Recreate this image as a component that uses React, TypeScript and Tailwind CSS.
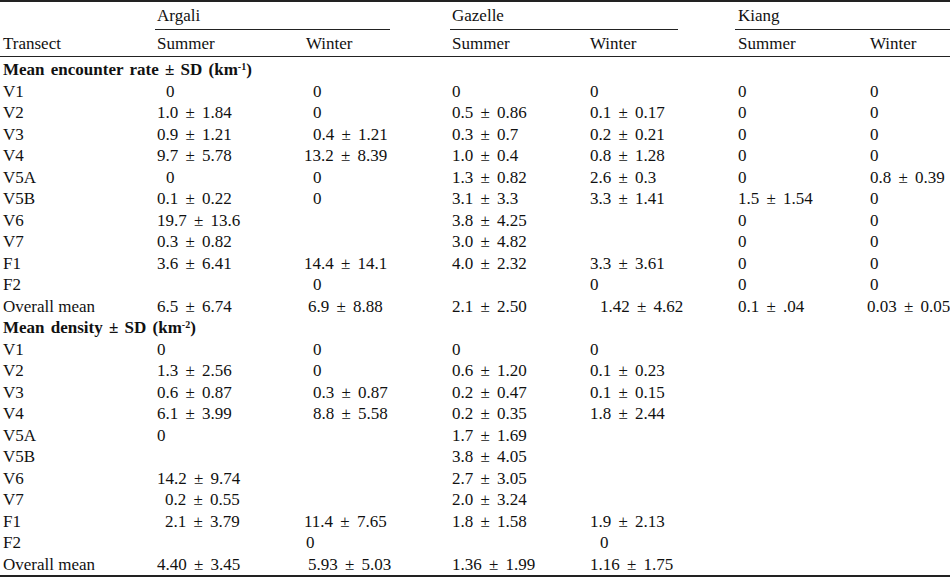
// Table of argali / gazelle / kiang encounter rates and densities
type Cell = [string, string?];

const GRID = "grid grid-cols-[157px_147px_148px_138px_148px_132px_80px]";

const encounter: [string, Cell[]][] = [
  ["V1", [["0", "pl-[9px]"], ["0", "pl-[9px]"], ["0"], ["0"], ["0"], ["0"]]],
  ["V2", [["1.0 ± 1.84"], ["0", "pl-[9px]"], ["0.5 ± 0.86"], ["0.1 ± 0.17"], ["0"], ["0"]]],
  ["V3", [["0.9 ± 1.21"], ["0.4 ± 1.21", "pl-[9px]"], ["0.3 ± 0.7"], ["0.2 ± 0.21"], ["0"], ["0"]]],
  ["V4", [["9.7 ± 5.78"], ["13.2 ± 8.39"], ["1.0 ± 0.4"], ["0.8 ± 1.28"], ["0"], ["0"]]],
  ["V5A", [["0", "pl-[9px]"], ["0", "pl-[9px]"], ["1.3 ± 0.82"], ["2.6 ± 0.3"], ["0"], ["0.8 ± 0.39"]]],
  ["V5B", [["0.1 ± 0.22"], ["0", "pl-[9px]"], ["3.1 ± 3.3"], ["3.3 ± 1.41"], ["1.5 ± 1.54"], ["0"]]],
  ["V6", [["19.7 ± 13.6"], [""], ["3.8 ± 4.25"], [""], ["0"], ["0"]]],
  ["V7", [["0.3 ± 0.82"], [""], ["3.0 ± 4.82"], [""], ["0"], ["0"]]],
  ["F1", [["3.6 ± 6.41"], ["14.4 ± 14.1"], ["4.0 ± 2.32"], ["3.3 ± 3.61"], ["0"], ["0"]]],
  ["F2", [[""], ["0", "pl-[9px]"], [""], ["0"], ["0"], ["0"]]],
  ["Overall mean", [["6.5 ± 6.74"], ["6.9 ± 8.88", "pl-[4px]"], ["2.1 ± 2.50"], ["1.42 ± 4.62", "pl-[10px]"], ["0.1 ± .04"], ["0.03 ± 0.05", "-ml-[3px]"]]],
];

const density: [string, Cell[]][] = [
  ["V1", [["0"], ["0", "pl-[9px]"], ["0"], ["0"], [""], [""]]],
  ["V2", [["1.3 ± 2.56"], ["0", "pl-[9px]"], ["0.6 ± 1.20"], ["0.1 ± 0.23"], [""], [""]]],
  ["V3", [["0.6 ± 0.87"], ["0.3 ± 0.87", "pl-[9px]"], ["0.2 ± 0.47"], ["0.1 ± 0.15"], [""], [""]]],
  ["V4", [["6.1 ± 3.99"], ["8.8 ± 5.58", "pl-[9px]"], ["0.2 ± 0.35"], ["1.8 ± 2.44"], [""], [""]]],
  ["V5A", [["0"], [""], ["1.7 ± 1.69"], [""], [""], [""]]],
  ["V5B", [[""], [""], ["3.8 ± 4.05"], [""], [""], [""]]],
  ["V6", [["14.2 ± 9.74"], [""], ["2.7 ± 3.05"], [""], [""], [""]]],
  ["V7", [["0.2 ± 0.55", "pl-[8px]"], [""], ["2.0 ± 3.24"], [""], [""], [""]]],
  ["F1", [["2.1 ± 3.79", "pl-[8px]"], ["11.4 ± 7.65"], ["1.8 ± 1.58"], ["1.9 ± 2.13"], [""], [""]]],
  ["F2", [[""], ["0", "pl-[2px]"], [""], ["0", "pl-[10px]"], [""], [""]]],
  ["Overall mean", [["4.40 ± 3.45"], ["5.93 ± 5.03", "pl-[4px]"], ["1.36 ± 1.99"], ["1.16 ± 1.75"], [""], [""]]],
];

function Row({ label, cells }: { label: string; cells: Cell[] }) {
  return (
    <div className={`${GRID} h-[21.5px] leading-[21.5px]`}>
      <div className="pl-[3px]">{label}</div>
      {cells.map(([t, cls], i) => (
        <div key={i} className={`whitespace-nowrap [word-spacing:3px] ${cls ?? ""}`}>{t}</div>
      ))}
      <div />
    </div>
  );
}

function Section({ title, exp }: { title: string; exp: string }) {
  return (
    <div className="h-[21.5px] leading-[21.5px] pl-[3px] font-bold whitespace-nowrap [word-spacing:2px]">
      {title} ± SD (km<sup className="text-[10px] leading-none">{exp}</sup>)
    </div>
  );
}

export default function App() {
  return (
    <div className="w-[950px] h-[578px] bg-white text-[#111] text-[17px] font-['Liberation_Serif',serif] overflow-hidden">
      <div className="border-t-2 border-[#222]">
        {/* species */}
        <div className={`${GRID} h-[28px]`}>
          <div />
          <div className="col-span-2 -ml-[2px]">
            <div className="w-[235px] h-[28px] leading-[28px] pl-[2px] border-b border-[#222]">Argali</div>
          </div>
          <div className="col-span-2 -ml-[2px]">
            <div className="w-[228px] h-[28px] leading-[28px] pl-[2px] border-b border-[#222]">Gazelle</div>
          </div>
          <div className="col-span-2 -ml-[3px]">
            <div className="w-[215px] h-[28px] leading-[28px] pl-[3px] border-b border-[#222]">Kiang</div>
          </div>
        </div>
        {/* seasons */}
        <div className={`${GRID} h-[27px] leading-[28px] border-b border-[#222]`}>
          <div className="pl-[3px]">Transect</div>
          <div>Summer</div>
          <div className="pl-[2px]">Winter</div>
          <div>Summer</div>
          <div>Winter</div>
          <div>Summer</div>
          <div>Winter</div>
        </div>
      </div>
      <div className="pt-[2px] border-b-2 border-[#222]">
        <Section title="Mean encounter rate" exp="-1" />
        {encounter.map(([l, c]) => <Row key={"e" + l} label={l} cells={c} />)}
        <Section title="Mean density" exp="-2" />
        {density.map(([l, c]) => <Row key={"d" + l} label={l} cells={c} />)}
      </div>
    </div>
  );
}
